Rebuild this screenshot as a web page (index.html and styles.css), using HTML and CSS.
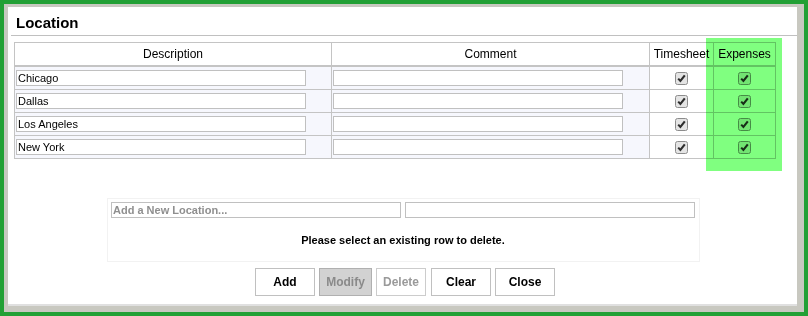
FILE: index.html
```html
<!DOCTYPE html>
<html>
<head>
<meta charset="utf-8">
<link rel="stylesheet" href="styles.css">
</head>
<body>
<div class="frame">
  <div class="window">
    <div class="panel">
      <div class="title">Location</div>
      <table class="grid">
        <colgroup>
          <col class="c-desc"><col class="c-comm"><col class="c-ts"><col class="c-exp">
        </colgroup>
        <thead>
          <tr><th>Description</th><th>Comment</th><th>Timesheet</th><th>Expenses</th></tr>
        </thead>
        <tbody>
          <tr>
            <td class="txt"><input class="field" value="Chicago"></td>
            <td class="txt"><input class="field" value=""></td>
            <td class="chk"><span class="box"><svg width="13" height="13" viewBox="0 0 13 13"><rect x="0.5" y="0.5" width="12" height="12" rx="2" fill="#e4e4e4" stroke="#8c8c8c"/><path d="M3.2 6.6 L5.4 9 L9.8 3.4" fill="none" stroke="#2d2d2d" stroke-width="2.1"/></svg></span></td>
            <td class="chk"><span class="box"><svg width="13" height="13" viewBox="0 0 13 13"><rect x="0.5" y="0.5" width="12" height="12" rx="2" fill="#e4e4e4" stroke="#8c8c8c"/><path d="M3.2 6.6 L5.4 9 L9.8 3.4" fill="none" stroke="#2d2d2d" stroke-width="2.1"/></svg></span></td>
          </tr>
          <tr>
            <td class="txt"><input class="field" value="Dallas"></td>
            <td class="txt"><input class="field" value=""></td>
            <td class="chk"><span class="box"><svg width="13" height="13" viewBox="0 0 13 13"><rect x="0.5" y="0.5" width="12" height="12" rx="2" fill="#e4e4e4" stroke="#8c8c8c"/><path d="M3.2 6.6 L5.4 9 L9.8 3.4" fill="none" stroke="#2d2d2d" stroke-width="2.1"/></svg></span></td>
            <td class="chk"><span class="box"><svg width="13" height="13" viewBox="0 0 13 13"><rect x="0.5" y="0.5" width="12" height="12" rx="2" fill="#e4e4e4" stroke="#8c8c8c"/><path d="M3.2 6.6 L5.4 9 L9.8 3.4" fill="none" stroke="#2d2d2d" stroke-width="2.1"/></svg></span></td>
          </tr>
          <tr>
            <td class="txt"><input class="field" value="Los Angeles"></td>
            <td class="txt"><input class="field" value=""></td>
            <td class="chk"><span class="box"><svg width="13" height="13" viewBox="0 0 13 13"><rect x="0.5" y="0.5" width="12" height="12" rx="2" fill="#e4e4e4" stroke="#8c8c8c"/><path d="M3.2 6.6 L5.4 9 L9.8 3.4" fill="none" stroke="#2d2d2d" stroke-width="2.1"/></svg></span></td>
            <td class="chk"><span class="box"><svg width="13" height="13" viewBox="0 0 13 13"><rect x="0.5" y="0.5" width="12" height="12" rx="2" fill="#e4e4e4" stroke="#8c8c8c"/><path d="M3.2 6.6 L5.4 9 L9.8 3.4" fill="none" stroke="#2d2d2d" stroke-width="2.1"/></svg></span></td>
          </tr>
          <tr>
            <td class="txt"><input class="field" value="New York"></td>
            <td class="txt"><input class="field" value=""></td>
            <td class="chk"><span class="box"><svg width="13" height="13" viewBox="0 0 13 13"><rect x="0.5" y="0.5" width="12" height="12" rx="2" fill="#e4e4e4" stroke="#8c8c8c"/><path d="M3.2 6.6 L5.4 9 L9.8 3.4" fill="none" stroke="#2d2d2d" stroke-width="2.1"/></svg></span></td>
            <td class="chk"><span class="box"><svg width="13" height="13" viewBox="0 0 13 13"><rect x="0.5" y="0.5" width="12" height="12" rx="2" fill="#e4e4e4" stroke="#8c8c8c"/><path d="M3.2 6.6 L5.4 9 L9.8 3.4" fill="none" stroke="#2d2d2d" stroke-width="2.1"/></svg></span></td>
          </tr>
        </tbody>
      </table>
      <div class="highlight"></div>
      <div class="editor-wrap">
        <div class="editor">
          <div class="editor-row">
            <input class="field" placeholder="Add a New Location...">
            <input class="field" value="">
          </div>
          <div class="message">Please select an existing row to delete.</div>
        </div>
      </div>
      <div class="buttons">
        <button class="btn w60">Add</button>
        <button class="btn btn-pressed w53">Modify</button>
        <button class="btn btn-disabled w50">Delete</button>
        <button class="btn w60 gap-extra">Clear</button>
        <button class="btn w60">Close</button>
      </div>
    </div>
  </div>
</div>
</body>
</html>
```
FILE: styles.css
```css
* { box-sizing: border-box; }
html, body { margin: 0; padding: 0; }
body {
  width: 808px;
  height: 316px;
  font-family: "Liberation Sans", Arial, sans-serif;
  color: #000;
  overflow: hidden;
}
.frame {
  width: 808px;
  height: 316px;
  border: 4px solid #22a035;
}
.window {
  height: 100%;
  border-style: solid;
  border-color: #c8c8c0;
  border-width: 3px 7px 6px 4px;
}
.panel {
  position: relative;
  height: 100%;
  background: #fff;
  border-bottom: 2px solid #e0e0e0;
}
.title {
  margin-left: 3px;
  padding-left: 5px;
  padding-top: 4px;
  height: 29px;
  line-height: 24px;
  font-size: 15px;
  font-weight: bold;
  border-bottom: 1px solid #c0c0c0;
}
.grid {
  margin: 6px 0 0 6px;
  border-collapse: separate;
  border-spacing: 0;
  table-layout: fixed;
  width: 762px;
  border-left: 1px solid #c4c4c4;
  border-top: 1px solid #c4c4c4;
}
.c-desc { width: 317px; }
.c-comm { width: 318px; }
.c-ts { width: 64px; }
.c-exp { width: 62px; }
.grid th, .grid td {
  border-right: 1px solid #c4c4c4;
  border-bottom: 1px solid #c4c4c4;
  padding: 0;
}
.grid th {
  height: 24px;
  font-size: 12px;
  font-weight: normal;
  text-align: center;
  background: #fff;
  border-bottom-width: 2px;
  white-space: nowrap;
}
.grid td {
  height: 23px;
  vertical-align: middle;
}
.grid td.txt {
  background: #f6f7fd;
  padding-left: 1px;
}
.grid td.chk {
  text-align: center;
  background: #fff;
}
.box {
  display: inline-block;
  width: 13px;
  height: 13px;
  vertical-align: middle;
}
.box svg { display: block; }
.field {
  display: block;
  width: 290px;
  height: 16px;
  margin: 0;
  padding: 0 1px;
  border: 1px solid #c0c0c0;
  border-radius: 0;
  font-family: "Liberation Sans", Arial, sans-serif;
  font-size: 11px;
  color: #000;
  background: #fff;
  outline: none;
}
.field::placeholder {
  color: #8f8f8f;
  font-weight: bold;
  opacity: 1;
}
.highlight {
  position: absolute;
  left: 698px;
  top: 31px;
  width: 76px;
  height: 133px;
  background: #80ff80;
  mix-blend-mode: multiply;
  pointer-events: none;
}
.editor-wrap {
  display: flex;
  justify-content: center;
  padding-left: 2px;
  margin-top: 39px;
}
.editor {
  width: 593px;
  height: 64px;
  border: 1px solid #f2f2f2;
  padding: 3px 4px 0 3px;
}
.editor-row {
  display: flex;
  gap: 4px;
}
.message {
  margin-top: 15px;
  font-size: 11px;
  line-height: 14px;
  font-weight: bold;
  text-align: center;
}
.buttons {
  display: flex;
  justify-content: center;
  gap: 4px;
  padding-left: 5px;
  margin-top: 6px;
}
.btn {
  height: 28px;
  margin: 0;
  padding: 0;
  border: 1px solid #c0c0c0;
  background: #fff;
  font-family: "Liberation Sans", Arial, sans-serif;
  font-size: 12px;
  font-weight: bold;
  color: #000;
  border-radius: 0;
}
.w60 { width: 60px; }
.w53 { width: 53px; }
.w50 { width: 50px; }
.gap-extra { margin-left: 1px; }
.btn-pressed {
  background: #d2d2d2;
  border-color: #b0b0b0;
  color: #8a8a8a;
}
.btn-disabled {
  color: #9a9a9a;
  border-color: #cccccc;
}
```
